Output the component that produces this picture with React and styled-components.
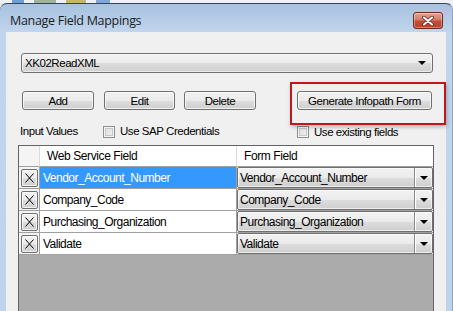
import React from 'react';
import styled, { createGlobalStyle } from 'styled-components';

const GlobalStyle = createGlobalStyle`
  html, body { margin: 0; padding: 0; }
  body {
    width: 453px;
    height: 311px;
    overflow: hidden;
    background: #e4ebf2;
    font-family: "Liberation Sans", Arial, sans-serif;
  }
  * { box-sizing: border-box; }
`;

const TopStrip = styled.div`
  height: 3px;
  display: flex;
  gap: 10px;
  padding-left: 12px;
  background: #eef2f6;
`;

const StripIcon = styled.span`
  width: ${p => p.w}px;
  height: 3px;
  background: ${p => p.c};
`;

const Window = styled.div`
  height: 308px;
  display: flex;
  flex-direction: column;
  padding: 0 6px;
  border-top: 1px solid #34465a;
  border-right: 1px solid #8fa5bc;
  border-top-left-radius: 7px;
  border-top-right-radius: 7px;
  background: linear-gradient(#a8c1de 0, #b7cee8 18px, #c1d6ed 28px, #bdd4ec 100%);
`;

const TitleBar = styled.div`
  height: 28px;
  flex-shrink: 0;
  display: flex;
  align-items: flex-start;
  justify-content: space-between;
  padding: 8px 3px 0 4px;
`;

const Title = styled.span`
  font-family: "Open Sans", "Noto Sans", sans-serif;
  font-size: 12.5px;
  line-height: 17px;
  letter-spacing: -0.3px;
  color: #1b1b1b;
`;

const CloseButton = styled.div`
  width: 30px;
  height: 17px;
  display: flex;
  align-items: center;
  justify-content: center;
  border: 1px solid #6b2a24;
  border-radius: 3px;
  background: linear-gradient(#e6a495 0, #d27a69 45%, #c24d39 55%, #b8402d 100%);
  box-shadow: inset 0 0 0 1px rgba(255, 255, 255, 0.35);
`;

const Client = styled.div`
  flex: 1;
  min-height: 0;
  display: flex;
  flex-direction: column;
  padding: 21px 12px 0 12px;
  background: #f0f0f0;
`;

const ComboBox = styled.div`
  width: 412px;
  height: 20px;
  margin-left: 3px;
  display: flex;
  align-items: center;
  justify-content: space-between;
  padding: 0 6px 0 3px;
  border: 1px solid #707070;
  border-radius: 3px;
  background: linear-gradient(#f2f2f2 0, #ebebeb 50%, #dddddd 51%, #cfcfcf 100%);
  box-shadow: inset 0 0 0 1px rgba(255, 255, 255, 0.6);
  font-size: 11.5px;
  letter-spacing: -0.45px;
  color: #000;
`;

const Arrow = styled.span`
  width: 0;
  height: 0;
  border-left: 4px solid transparent;
  border-right: 4px solid transparent;
  border-top: 4px solid #000;
`;

const ButtonRow = styled.div`
  display: flex;
  align-items: center;
  margin-top: 18px;
  padding-left: 4px;
`;

const Button = styled.div`
  width: ${p => p.w}px;
  height: 19px;
  margin-left: ${p => p.gap || 0}px;
  display: flex;
  align-items: center;
  justify-content: center;
  border: 1px solid #707070;
  border-radius: 3px;
  background: linear-gradient(#f2f2f2 0, #ebebeb 50%, #dddddd 51%, #cfcfcf 100%);
  box-shadow: inset 0 0 0 1px rgba(255, 255, 255, 0.7);
  font-size: 11.5px;
  letter-spacing: -0.45px;
  color: #000;
`;

const Highlighted = styled.div`
  position: relative;
  margin-left: 41px;
  &::after {
    content: "";
    position: absolute;
    left: -7px;
    top: -9px;
    width: 152px;
    height: 39px;
    border: 2px solid #c0161c;
    box-shadow: 1px 2px 4px rgba(0, 0, 0, 0.25);
    pointer-events: none;
  }
`;

const OptionRow = styled.div`
  display: flex;
  align-items: center;
  height: 13px;
  margin-top: 15px;
  padding-left: 2px;
  font-size: 11.5px;
  letter-spacing: -0.45px;
  line-height: 13px;
  color: #000;
`;

const Caption = styled.span`
  width: 83px;
`;

const Check = styled.label`
  display: flex;
  align-items: center;
  gap: 5px;
  width: ${p => p.w ? `${p.w}px` : 'auto'};
  margin-top: ${p => p.dy || 0}px;
`;

const Box = styled.span`
  width: 12px;
  height: 12px;
  border: 1px solid #8e8f8f;
  background: linear-gradient(135deg, #d9d9d9 0, #f4f4f4 100%);
  box-shadow: inset 0 0 0 1px #f4f4f4, inset 0 0 0 2px #c8c8c8;
`;

const Grid = styled.div`
  flex: 1;
  width: 416px;
  margin-top: 7px;
  display: flex;
  flex-direction: column;
  border: 1px solid #646464;
  border-bottom: none;
  background: #ababab;
`;

const GridRow = styled.div`
  display: grid;
  grid-template-columns: 21px 197px 196px;
  height: ${p => p.head ? 21 : 22}px;
`;

const Cell = styled.div`
  display: flex;
  align-items: center;
  padding-left: ${p => p.pad ?? 3}px;
  border-right: ${p => p.last ? 'none' : `1px solid ${p.head ? '#dcdcdc' : '#a0a0a0'}`};
  border-bottom: 1px solid #a0a0a0;
  background: ${p => p.selected ? '#3399ff' : p.rowHead ? '#f4f4f4' : '#fff'};
  color: ${p => p.selected ? '#fff' : '#000'};
  font-size: 12px;
  letter-spacing: ${p => p.head ? -0.4 : -0.5}px;
  white-space: nowrap;
  overflow: hidden;
`;

const RemoveButton = styled.div`
  width: 17px;
  height: 18px;
  margin-left: 1px;
  display: flex;
  align-items: center;
  justify-content: center;
  border: 1px solid #707070;
  border-radius: 2px;
  background: linear-gradient(#f2f2f2 0, #ebebeb 50%, #dddddd 51%, #cfcfcf 100%);
  box-shadow: inset 0 0 0 1px rgba(255, 255, 255, 0.7);
`;

const CellCombo = styled.div`
  flex: 1;
  height: 100%;
  display: flex;
  align-items: stretch;
  border: 1px solid #707070;
  border-radius: 2px;
  background: linear-gradient(#f2f2f2 0, #ebebeb 50%, #dddddd 51%, #cfcfcf 100%);
  box-shadow: inset 0 0 0 1px rgba(255, 255, 255, 0.6);
`;

const CellComboText = styled.span`
  flex: 1;
  display: flex;
  align-items: center;
  padding-left: 2px;
`;

const CellComboDrop = styled.span`
  width: 18px;
  display: flex;
  align-items: center;
  justify-content: center;
  border-left: 1px solid #8a8a8a;
  box-shadow: inset 1px 0 0 #fff;
`;

const rows = ['Vendor_Account_Number', 'Company_Code', 'Purchasing_Organization', 'Validate'];

function CloseGlyph() {
  return (
    <svg width="14" height="10" viewBox="0 0 14 10">
      <path d="M3 1.5 L11 8.5 M11 1.5 L3 8.5" stroke="#5a2a22" strokeWidth="3.6" strokeLinecap="round" />
      <path d="M3 1.5 L11 8.5 M11 1.5 L3 8.5" stroke="#fff" strokeWidth="2" strokeLinecap="round" />
    </svg>
  );
}

function XGlyph() {
  return (
    <svg width="9" height="10" viewBox="0 0 9 10">
      <path d="M0.5 0.5 L8.5 9.5 M8.5 0.5 L0.5 9.5" stroke="#000" strokeWidth="1" />
    </svg>
  );
}

export default function App() {
  return (
    <>
      <GlobalStyle />
      <TopStrip>
        <StripIcon w={12} c="#6f9fd0" />
        <StripIcon w={22} c="#9fb59a" />
        <StripIcon w={20} c="#c6b56a" />
        <StripIcon w={14} c="#7fa7d6" />
      </TopStrip>
      <Window>
        <TitleBar>
          <Title>Manage Field Mappings</Title>
          <CloseButton><CloseGlyph /></CloseButton>
        </TitleBar>
        <Client>
          <ComboBox>
            <span>XK02ReadXML</span>
            <Arrow />
          </ComboBox>
          <ButtonRow>
            <Button w={72}>Add</Button>
            <Button w={71} gap={10}>Edit</Button>
            <Button w={72} gap={9}>Delete</Button>
            <Highlighted>
              <Button w={135}>Generate Infopath Form</Button>
            </Highlighted>
          </ButtonRow>
          <OptionRow>
            <Caption>Input Values</Caption>
            <Check w={194}><Box />Use SAP Credentials</Check>
            <Check dy={1}><Box />Use existing fields</Check>
          </OptionRow>
          <Grid>
            <GridRow head>
              <Cell head rowHead />
              <Cell head pad={7}>Web Service Field</Cell>
              <Cell head last pad={7}>Form Field</Cell>
            </GridRow>
            {rows.map((name, i) => (
              <GridRow key={name}>
                <Cell rowHead pad={1}>
                  <RemoveButton><XGlyph /></RemoveButton>
                </Cell>
                <Cell selected={i === 0}>{name}</Cell>
                <Cell last pad={0}>
                  <CellCombo>
                    <CellComboText>{name}</CellComboText>
                    <CellComboDrop><Arrow /></CellComboDrop>
                  </CellCombo>
                </Cell>
              </GridRow>
            ))}
          </Grid>
        </Client>
      </Window>
    </>
  );
}
